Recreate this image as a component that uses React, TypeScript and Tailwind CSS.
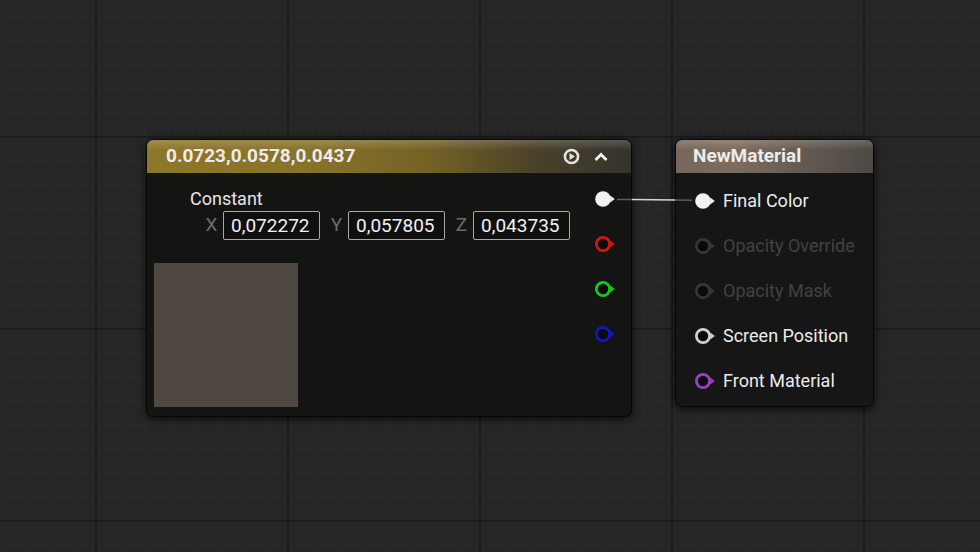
import React from "react";

const W = 980;
const H = 552;

function GridBg() {
  const minorX = Array.from({ length: 42 }, (_, i) => i * 24);
  const minorY = Array.from({ length: 24 }, (_, i) => 17 + i * 24);
  const majorX = [96, 288, 480, 672, 864];
  const majorY = [137, 329, 521];
  return (
    <svg className="absolute inset-0" width={W} height={H}>
      <rect width={W} height={H} fill="#262626" />
      {minorX.map((x) => (
        <line key={"mx" + x} x1={x + 0.5} y1={0} x2={x + 0.5} y2={H} stroke="#2a2a2a" strokeWidth={1} />
      ))}
      {minorY.map((y) => (
        <line key={"my" + y} x1={0} y1={y + 0.5} x2={W} y2={y + 0.5} stroke="#2a2a2a" strokeWidth={1} />
      ))}
      {majorX.map((x) => (
        <line key={"Mx" + x} x1={x} y1={0} x2={x} y2={H} stroke="#1c1c1c" strokeWidth={2} />
      ))}
      {majorY.map((y) => (
        <line key={"My" + y} x1={0} y1={y} x2={W} y2={y} stroke="#1c1c1c" strokeWidth={2} />
      ))}
    </svg>
  );
}

type PinProps = { color: string; filled?: boolean };

function Pin({ color, filled }: PinProps) {
  return (
    <svg width="22" height="18" viewBox="0 0 22 18" className="shrink-0">
      {filled ? (
        <circle cx="8" cy="9" r="7.8" fill={color} />
      ) : (
        <circle cx="8" cy="9" r="6.6" fill="#0a0a0a" stroke={color} strokeWidth="2.8" />
      )}
      <polygon points="15.2,5.5 19.8,9 15.2,12.5" fill={color} />
    </svg>
  );
}

function Field({ label, value }: { label: string; value: string }) {
  return (
    <div className="flex items-center">
      <span className="mr-[5px] w-[13px] text-center text-[19px] text-[#6c6c6c]">{label}</span>
      <div className="h-[29px] w-[97px] rounded-[2px] border border-[#a8a8a8] bg-[#0f0f0f] pl-[7px] text-[19px] leading-[27px] text-[#f2f2f2]">
        {value}
      </div>
    </div>
  );
}

function ConstantNode() {
  return (
    <div className="absolute left-[146px] top-[139px] flex h-[278px] w-[486px] flex-col overflow-hidden rounded-[7px] border border-[#070707] bg-[#141513] shadow-[0_2px_8px_rgba(0,0,0,0.7)]">
      <div className="relative flex h-[33px] items-center justify-between bg-[linear-gradient(90deg,#8e7729_0%,#88722a_35%,#746226_58%,#4a4129_80%,#35332d_100%)] pl-[19px] pr-[22px]">
        <div className="absolute inset-x-0 top-0 h-[10px] bg-[linear-gradient(180deg,rgba(255,255,255,0.18),rgba(255,255,255,0))]" />
        <span className="relative text-[19px] font-bold text-[#ececec]">0.0723,0.0578,0.0437</span>
        <div className="relative flex items-center gap-[13px]">
          <svg width="17" height="17" viewBox="0 0 16 16">
            <circle cx="8" cy="8" r="6.2" fill="none" stroke="#e4e4e4" strokeWidth="2.4" />
            <polygon points="6.2,4.6 11.2,8 6.2,11.4" fill="#e4e4e4" />
          </svg>
          <svg width="16" height="16" viewBox="0 0 16 16">
            <polyline points="2.5,11 8,5.5 13.5,11" fill="none" stroke="#f4f4f4" strokeWidth="2.8" />
          </svg>
        </div>
      </div>
      <div className="flex flex-1 justify-between">
        <div className="flex flex-col pl-[7px] pt-[16px]">
          <div className="h-5 pl-[36px] leading-5 text-[#e6e6e6]">Constant</div>
          <div className="mt-[2px] flex items-center gap-[10px] pl-[51px]">
            <Field label="X" value="0,072272" />
            <Field label="Y" value="0,057805" />
            <Field label="Z" value="0,043735" />
          </div>
          <div className="mt-[23px] h-[144px] w-[144px] bg-[#4f4741]" />
        </div>
        <div className="flex flex-col gap-[27px] pr-[14px] pt-[17px]">
          <Pin color="#f2f2f2" filled />
          <Pin color="#d41414" />
          <Pin color="#18c818" />
          <Pin color="#1414c8" />
        </div>
      </div>
    </div>
  );
}

const inputs: { name: string; color: string; filled?: boolean; dim?: boolean }[] = [
  { name: "Final Color", color: "#f2f2f2", filled: true },
  { name: "Opacity Override", color: "#363636", dim: true },
  { name: "Opacity Mask", color: "#363636", dim: true },
  { name: "Screen Position", color: "#cfcfcf" },
  { name: "Front Material", color: "#a23cc8" },
];

function MaterialNode() {
  return (
    <div className="absolute left-[675px] top-[139px] flex h-[268px] w-[199px] flex-col overflow-hidden rounded-[7px] border border-[#070707] bg-[#151615] shadow-[0_2px_8px_rgba(0,0,0,0.7)]">
      <div className="relative flex h-[33px] items-center bg-[linear-gradient(90deg,#77675a_0%,#7c6c5d_30%,#61574f_70%,#4c4844_100%)] pl-[17px]">
        <div className="absolute inset-x-0 top-0 h-[10px] bg-[linear-gradient(180deg,rgba(255,255,255,0.18),rgba(255,255,255,0))]" />
        <span className="relative text-[19px] font-bold text-[#ececec]">NewMaterial</span>
      </div>
      <div className="flex flex-col pt-[5px]">
        {inputs.map((p) => (
          <div key={p.name} className="flex h-[45px] items-center gap-[6px] pl-[19px]">
            <Pin color={p.color} filled={p.filled} />
            <span className={p.dim ? "text-[#424242]" : "text-[#ececec]"}>{p.name}</span>
          </div>
        ))}
      </div>
    </div>
  );
}

function Wire() {
  return (
    <svg className="pointer-events-none absolute inset-0" width={W} height={H}>
      <line x1={617} y1={199.5} x2={632} y2={199.6} stroke="#5c5c5c" strokeWidth={1.5} />
      <line x1={632} y1={199.6} x2={675} y2={200} stroke="#d6d6d6" strokeWidth={1.5} />
      <line x1={675} y1={200} x2={692} y2={200.2} stroke="#5c5c5c" strokeWidth={1.5} />
    </svg>
  );
}

export default function App() {
  return (
    <div className="relative h-[552px] w-[980px] overflow-hidden bg-[#262626] font-['Roboto',sans-serif] text-[18px]">
      <GridBg />
      <ConstantNode />
      <MaterialNode />
      <Wire />
    </div>
  );
}
